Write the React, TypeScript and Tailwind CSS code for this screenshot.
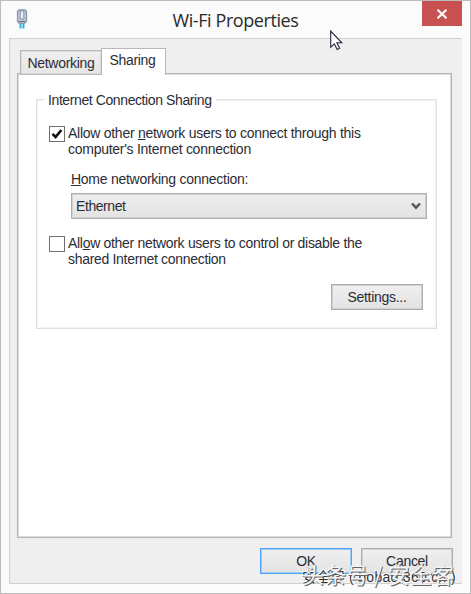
import type { ReactNode } from 'react'

interface ButtonProps {
    children: ReactNode
    primary?: boolean
}

function DialogButton({ children, primary }: ButtonProps) {
    return (
        <button
            className={`h-[26px] w-[92px] border bg-linear-to-b from-[#efefef] to-[#e3e3e3] text-center ${
                primary ? 'border-[#4ea3f8] inset-shadow-[0_0_0_1px_#9dcbf6]' : 'border-[#adadad] inset-shadow-[0_0_0_1px_#d2d2d2]'
            }`}
        >
            {children}
        </button>
    )
}

function Checkbox({ checked }: { checked?: boolean }) {
    return (
        <span className="mt-px flex size-4 shrink-0 items-center justify-center border border-[#707070] bg-white">
            {checked && (
                <svg width="12" height="12" viewBox="0 0 12 12" fill="none">
                    <path d="M1.5 5.8L4.6 9L10.4 2" stroke="#111" strokeWidth="2.6" />
                </svg>
            )}
        </span>
    )
}

function AdapterIcon() {
    return (
        <svg className="absolute top-2 left-[15px]" width="12" height="20" viewBox="0 0 12 20">
            <path d="M4.5 14V19.5M7.5 14V19.5" stroke="#35afd6" strokeWidth="2" />
            <path d="M3 0.8H9L10.5 2.5V12.5L8.5 14.3H3.5L1.5 12.5V2.5Z" fill="#c1cad9" stroke="#8795ad" strokeWidth="1.3" />
            <rect x="4.2" y="2" width="3.6" height="8" fill="#edf1f7" stroke="#8693ab" />
            <path d="M3 12.5H9" stroke="#606e88" />
        </svg>
    )
}

function Cursor() {
    return (
        <svg className="absolute top-[29px] left-[329px]" width="13" height="21" viewBox="0 0 13 21">
            <path d="M.7 1V17.2L4.3 13.8L7.2 19.4L9.6 18.2L6.9 12.8H11.8Z" fill="#fff" stroke="#25253b" strokeWidth="1.1" />
        </svg>
    )
}

export default function App() {
    return (
        <div className="relative flex h-[594px] w-[471px] flex-col border border-[#bdbdbd] bg-[#fbfbfb] pr-2 pb-[9px] pl-2 font-['Liberation_Sans',sans-serif] text-[14px] leading-4 tracking-[-0.3px] text-[#2c2c35]">
            <header className="relative flex h-[37px] shrink-0 justify-center pt-[7px]">
                <h1 className="font-['Open_Sans',sans-serif] text-[18px] leading-[25px] tracking-[-0.42px] text-[#2a2a2a]">Wi-Fi Properties</h1>
                <button className="absolute top-0 right-0 flex h-[25px] w-10 items-center justify-center bg-[#c75050]">
                    <svg width="12" height="10" viewBox="0 0 12 10">
                        <path d="M1.5 .8L10.5 9.2M10.5 .8L1.5 9.2" stroke="#fff" strokeWidth="2.2" />
                    </svg>
                </button>
            </header>

            <main className="flex grow flex-col border-t border-b border-l border-[#d0d0d0] bg-[#efefef] pt-[9px] pr-[10px] pl-[7px]">
                <div className="relative z-10 -mb-0.5 flex h-[27px] shrink-0 items-end pl-[3px]">
                    <div className="-mr-px h-[25px] w-[82px] border border-[#b8b8b8] bg-linear-to-b from-[#f0f0f0] to-[#e5e5e5] pt-1 text-center inset-shadow-[0_0_0_1px_#dadada]">Networking</div>
                    <div className="h-[27px] w-[65px] border border-b-0 border-[#b8b8b8] bg-white pt-[3px] pr-0.5 text-center">Sharing</div>
                </div>

                <section className="h-[465px] w-[435px] shrink-0 border border-[#b5b5b5] bg-white pt-[25px] pl-[18px] inset-shadow-[0_0_0_1px_#dcdcdc]">
                    <div className="relative h-[230px] w-[401px] border border-[#dfdfdf] pt-[25px] pl-3 inset-shadow-[0_0_0_1px_#f3f3f3]">
                        <span className="absolute -top-[8px] left-[7px] bg-white px-1 leading-4 tracking-[-0.4px]">Internet Connection Sharing</span>
                        <label className="flex gap-[3px]">
                            <Checkbox checked />
                            <span className="tracking-[-0.27px] whitespace-nowrap">
                                Allow other <u>n</u>etwork users to connect through this<br />computer's Internet connection
                            </span>
                        </label>
                        <p className="mt-3.5 ml-[22px] tracking-[-0.27px]"><u>H</u>ome networking connection:</p>
                        <div className="mt-[6px] ml-[22px] flex h-[26px] w-[356px] items-center justify-between border border-[#adadad] bg-linear-to-b from-[#efefef] to-[#e3e3e3] pr-[5px] pl-1 inset-shadow-[0_0_0_1px_#d2d2d2]">
                            <span className="tracking-[-0.42px]">Ethernet</span>
                            <svg width="10" height="8" viewBox="0 0 10 8" fill="none">
                                <path d="M1 1.5L5 5.7L9 1.5" stroke="#555" strokeWidth="2.4" />
                            </svg>
                        </div>
                        <label className="mt-4 flex gap-[3px]">
                            <Checkbox />
                            <span className="tracking-[-0.31px] whitespace-nowrap">
                                All<u>o</u>w other network users to control or disable the<br />shared Internet connection
                            </span>
                        </label>
                        <div className="mt-[17px] flex justify-end pr-[13px]">
                            <DialogButton>Settin<u>g</u>s...</DialogButton>
                        </div>
                    </div>
                </section>

                <footer className="-mr-px mt-[10px] flex justify-end gap-[9px]">
                    <DialogButton primary>OK</DialogButton>
                    <DialogButton>Cancel</DialogButton>
                </footer>
            </main>

            <AdapterIcon />
            <Cursor />

            <div className="absolute top-[568px] left-[301px] font-['Liberation_Sans','Noto_Sans_CJK_SC',sans-serif] text-[14px] leading-4 tracking-[0.3px] whitespace-nowrap text-[#333] [text-shadow:-1px_-1px_0_#fff,1px_-1px_0_#fff]">
                安全客 ( bobao.360.cn )
            </div>
            <div className="absolute top-[560px] left-[301px] font-['Noto_Sans_CJK_SC',sans-serif] text-[22px] leading-6 tracking-[0.2px] whitespace-nowrap text-[#f3f3f3] [text-shadow:1px_1px_0_#666]">
                头条号 / 安全客
            </div>
        </div>
    )
}
